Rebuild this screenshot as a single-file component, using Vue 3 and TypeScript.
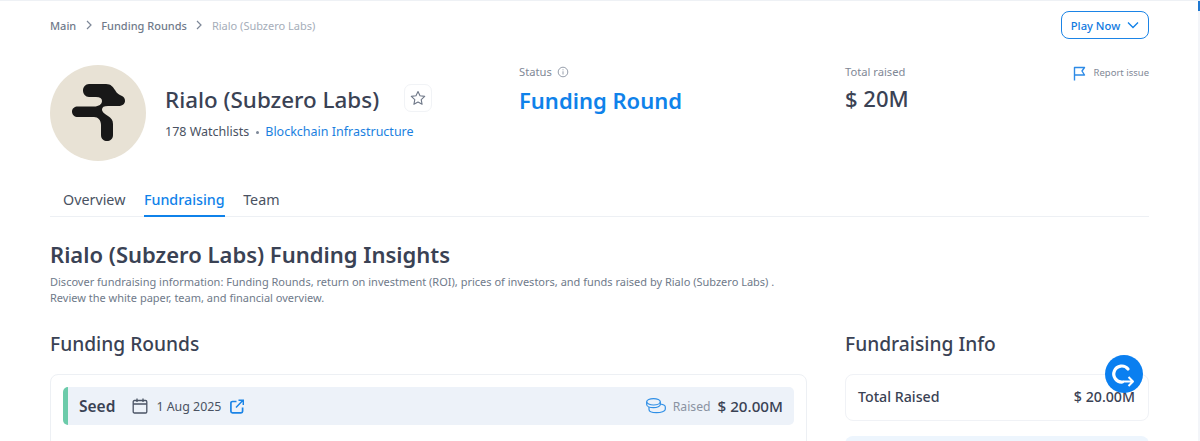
<script setup lang="ts">
const crumbs = ['Main', 'Funding Rounds']
const tabs = ['Overview', 'Fundraising', 'Team']
const activeTab = 'Fundraising'
</script>

<template>
  <div class="page">
    <div class="topbar">
      <nav class="crumbs">
        <template v-for="c in crumbs" :key="c">
          <span class="crumb">{{ c }}</span>
          <svg class="crumb-sep" width="12" height="12" viewBox="0 0 12 12" fill="none">
            <path d="M4 2l4 4-4 4" stroke="#7d8797" stroke-width="1.2" />
          </svg>
        </template>
        <span class="crumb current">Rialo (Subzero Labs)</span>
      </nav>
      <button class="play">
        Play Now
        <svg width="12" height="8" viewBox="0 0 12 8" fill="none">
          <path d="M1 1.500l5 5 5-5" stroke="#0f80e8" stroke-width="1.300" />
        </svg>
      </button>
    </div>

    <header class="head">
      <div class="identity">
        <div class="avatar">
          <svg width="96" height="96" viewBox="0 0 96 96">
            <path
              fill="#181818"
              d="M39 19H56C61 19 63 22 65 25C67 29 70 30 71 30.500C74 31.500 75 33.500 75 36C75 39 72 41 68 41H58C54 41 52 42 52 44.500C52 47 55 49 58 51C61 53 63 55 63 59V70C63 74 60 76 57 76C54 76 51 74 51 70V60C51 55 48 52 44 52H28C24.500 52 22 50 22 46.500C22 43.500 24.500 41.500 28 41.500H44C49 41.500 52 39 52 36C52 33.500 50 32 46 32H39C35.500 32 33 29 33 25.500C33 22 35.500 19 39 19Z"
            />
          </svg>
        </div>
        <div class="who">
          <div class="name-row">
            <h1>Rialo (Subzero Labs)</h1>
            <span class="star">
              <svg width="16" height="16" viewBox="0 0 16 16" fill="none">
                <path d="M8 1.500l2 4.300 4.700.6-3.500 3.200.9 4.700L8 12l-4.100 2.300.9-4.700L1.300 6.400 6 5.800z" stroke="#6f7888" stroke-width="1.100" stroke-linejoin="round" />
              </svg>
            </span>
          </div>
          <div class="meta">
            <span>178 Watchlists</span>
            <i class="dot"></i>
            <a>Blockchain Infrastructure</a>
          </div>
        </div>
      </div>

      <div class="stat status">
        <div class="stat-label">
          Status
          <svg width="12" height="12" viewBox="0 0 12 12" fill="none">
            <circle cx="6" cy="6" r="4.800" stroke="#8a93a2" stroke-width="0.900" />
            <path d="M6 5.300V8.500M6 3.300v1" stroke="#8a93a2" stroke-width="0.900" />
          </svg>
        </div>
        <div class="stat-value blue">Funding Round</div>
      </div>

      <div class="stat total">
        <div class="stat-label">Total raised</div>
        <div class="stat-value">$ 20M</div>
      </div>

      <a class="report">
        <svg width="13" height="15" viewBox="0 0 13 15" fill="none">
          <path d="M1.500 14.500V1.500h10L9 5l2.500 4H1.500" stroke="#2d8ae6" stroke-width="1.400" stroke-linejoin="round" />
        </svg>
        Report issue
      </a>
    </header>

    <div class="tabs">
      <span v-for="t in tabs" :key="t" class="tab" :class="{ active: t === activeTab }">{{ t }}</span>
    </div>

    <section class="intro">
      <h2>Rialo (Subzero Labs) Funding Insights</h2>
      <p>
        Discover fundraising information: Funding Rounds, return on investment (ROI), prices of investors, and funds raised by Rialo (Subzero Labs) .<br />
        Review the white paper, team, and financial overview.
      </p>
    </section>

    <div class="columns">
      <section class="main-col">
        <h3>Funding Rounds</h3>
        <div class="card">
          <div class="round">
            <span class="round-name">Seed</span>
            <svg class="cal" width="16" height="16" viewBox="0 0 16 16" fill="none">
              <rect x="1.200" y="2.500" width="13.600" height="12.500" rx="1.200" stroke="#4a5364" stroke-width="1.300" />
              <path d="M1.200 6h13.600M5 .5v3.500M11 .5v3.500" stroke="#4a5364" stroke-width="1.300" />
            </svg>
            <span class="round-date">1 Aug 2025</span>
            <svg width="14" height="15" viewBox="0 0 14 15" fill="none">
              <path d="M6.500 2.500H2.500A1.600 1.600 0 0 0 .9 4.100v8.100A1.600 1.600 0 0 0 2.500 13.800h8.500a1.600 1.600 0 0 0 1.600-1.600V8.500" stroke="#1b84e6" stroke-width="1.700" />
              <path d="M6 8.500L12.500 1.800M8.500 1.200h4.800V6" stroke="#1b84e6" stroke-width="1.500" />
            </svg>
            <span class="spacer"></span>
            <svg width="20" height="16" viewBox="0 0 20 16" fill="none" stroke="#2f8fe6" stroke-width="1.200">
              <ellipse cx="7.500" cy="3.800" rx="6.800" ry="3.200" />
              <path d="M.7 3.800v2.600c0 1.800 3 3.200 6.800 3.200s6.800-1.400 6.800-3.200V3.800" />
              <path d="M3 9v2.500c0 1.800 3 3.200 7.500 3.200s8.800-1.400 8.800-3.400V9c0-1.400-1.800-2.500-5-3" />
            </svg>
            <span class="raised-label">Raised</span>
            <span class="raised-value">$ 20.00M</span>
          </div>
        </div>
      </section>

      <aside class="side-col">
        <h3>Fundraising Info</h3>
        <div class="info-card">
          <span class="info-label">Total Raised</span>
          <span class="info-value">$ 20.00M</span>
        </div>
        <div class="info-next"></div>
      </aside>
    </div>

    <div class="fab">
      <svg width="38" height="38" viewBox="0 0 38 38" fill="none">
        <path d="M23 14A8 8 0 1 0 17.500 27" stroke="#fff" stroke-width="3.200" stroke-linecap="round" />
        <path d="M18 26.500H28M23.500 22l4.500 4.500-4.500 4.500" stroke="#fff" stroke-width="2" stroke-linejoin="round" />
      </svg>
    </div>

    <div class="scrollbar"><div class="thumb"></div></div>
  </div>
</template>

<style>
html,
body {
  margin: 0;
  background: #fff;
  overflow: hidden;
}
</style>

<style scoped>
.page {
  position: relative;
  box-sizing: border-box;
  height: 441px;
  overflow: hidden;
  padding: 10px 51px 0 50px;
  border-top: 1px solid #eef1f5;
  font-family: 'Noto Sans', sans-serif;
  color: #3a4254;
}

.topbar {
  display: flex;
  align-items: center;
  justify-content: space-between;
  height: 28px;
}

.crumbs {
  display: flex;
  align-items: center;
  gap: 6.500px;
  font-size: 11px;
  color: #6f7a8a;
  font-weight: 500;
}

.crumb.current {
  color: #a5adb9;
  font-weight: 400;
}

.play {
  display: flex;
  align-items: center;
  justify-content: center;
  gap: 7px;
  box-sizing: border-box;
  width: 88px;
  height: 28px;
  padding: 0;
  border: 1px solid #1b84e6;
  border-radius: 8px;
  background: #fff;
  color: #1079e0;
  font: 500 11.200px 'Noto Sans', sans-serif;
}

.head {
  display: flex;
  margin-top: 26px;
  height: 96px;
}

.identity {
  display: flex;
  width: 469px;
  flex: none;
}

.avatar {
  width: 96px;
  height: 96px;
  border-radius: 50%;
  background: #e8e2d5;
  flex: none;
}

.avatar svg {
  display: block;
}

.who {
  margin-left: 19px;
  padding-top: 21px;
}

.name-row {
  display: flex;
  align-items: center;
  gap: 25px;
}

h1 {
  margin: 0;
  font-size: 22.400px;
  line-height: 28px;
  font-weight: 500;
  color: #3a4254;
}

.star {
  display: flex;
  align-items: center;
  justify-content: center;
  width: 28px;
  height: 28px;
  box-sizing: border-box;
  border: 1px solid #f1f3f6;
  border-radius: 7px;
  margin-top: -4px;
}

.meta {
  display: flex;
  align-items: center;
  margin-top: 9px;
  font-size: 12.500px;
  line-height: 18px;
  color: #4a5262;
}

.dot {
  width: 3px;
  height: 3px;
  margin: 0 6.500px;
  border-radius: 50%;
  background: #7d8797;
}

.meta a {
  color: #1b7fe0;
}

.status {
  width: 326px;
  flex: none;
}

.stat-label {
  display: flex;
  align-items: center;
  gap: 5px;
  margin-top: -1px;
  font-size: 11.200px;
  line-height: 16px;
  color: #7f8896;
}

.stat-value {
  margin-top: 3px;
  font-size: 22px;
  line-height: 30px;
  font-weight: 500;
  color: #3a4254;
}

.stat-value.blue {
  margin-top: 5px;
  font-weight: 600;
  color: #0f82ea;
}

.total {
  flex: 1;
}

.report {
  display: flex;
  align-items: center;
  align-self: flex-start;
  gap: 8px;
  font-size: 9.500px;
  line-height: 16px;
  color: #7f8896;
}

.tabs {
  display: flex;
  gap: 18.500px;
  margin-top: 28px;
  padding-left: 13px;
  border-bottom: 1px solid #edf0f4;
}

.tab {
  padding-bottom: 4px;
  margin-bottom: -1px;
  border-bottom: 2px solid transparent;
  font-size: 14.300px;
  line-height: 22px;
  color: #4a5262;
}

.tab.active {
  border-bottom-color: #0f82ea;
  color: #0f82ea;
  font-weight: 500;
}

.intro {
  margin-top: 22px;
}

h2 {
  margin: 0;
  font-size: 22px;
  line-height: 30px;
  font-weight: 600;
  color: #3a4254;
}

.intro p {
  margin: 5px 0 0;
  font-size: 11px;
  line-height: 16px;
  color: #6f7a8a;
}

.columns {
  display: flex;
  gap: 38px;
  margin-top: 25px;
}

.main-col {
  width: 757px;
  flex: none;
}

.side-col {
  flex: 1;
}

h3 {
  margin: 0 0 17px;
  font-size: 19.200px;
  line-height: 26px;
  font-weight: 500;
  color: #3a4254;
}

.card {
  box-sizing: border-box;
  height: 120px;
  padding: 12px;
  border: 1px solid #edf0f4;
  border-radius: 8px;
}

.round {
  display: flex;
  align-items: center;
  box-sizing: border-box;
  height: 38px;
  padding: 0 11px;
  border-left: 5px solid #6ccbaa;
  border-radius: 5px;
  background: #edf2f9;
}

.round-name {
  margin-right: 17px;
  font-size: 15.500px;
  font-weight: 600;
}

.round-date {
  margin: 0 9px 0 8px;
  font-size: 12.400px;
  color: #4a5262;
}

.spacer {
  flex: 1;
}

.raised-label {
  margin: 0 7px;
  font-size: 12.200px;
  color: #8a93a2;
}

.raised-value {
  font-size: 15.200px;
  font-weight: 500;
}

.info-card {
  display: flex;
  align-items: center;
  justify-content: space-between;
  box-sizing: border-box;
  height: 47px;
  padding: 0 13px 2px 12px;
  border: 1px solid #f0f2f6;
  border-radius: 8px;
}

.info-label,
.info-value {
  font-size: 14.200px;
  font-weight: 500;
}

.info-next {
  height: 60px;
  margin-top: 15px;
  border-radius: 8px;
  background: #edf5fd;
}

.fab {
  position: absolute;
  left: 1105px;
  top: 354px;
  width: 38px;
  height: 38px;
  border-radius: 50%;
  background: #0a7ff0;
}

.fab svg {
  display: block;
}

.scrollbar {
  position: absolute;
  right: 0;
  top: -1px;
  width: 2px;
  height: 442px;
  background: #f3f5f9;
}

.thumb {
  height: 11px;
  background: #1f78d1;
}
</style>
